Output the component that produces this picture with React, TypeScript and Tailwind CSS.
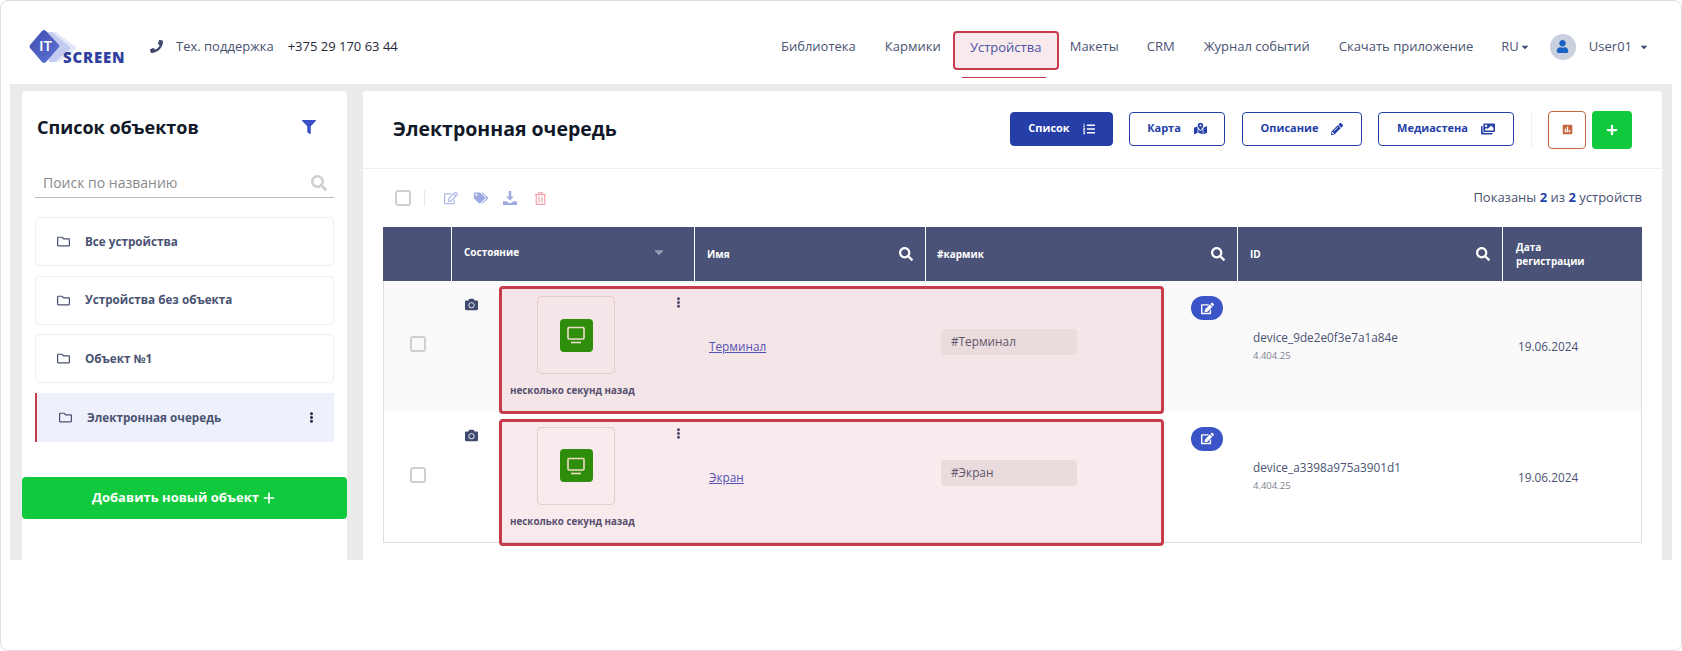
import { Plus } from 'lucide-react';
import {
  FaCamera,
  FaCaretDown,
  FaEdit,
  FaEllipsisV,
  FaFilter,
  FaImages,
  FaListOl,
  FaMapMarkedAlt,
  FaPencilAlt,
  FaPhone,
  FaPlus,
  FaPoll,
  FaRegEdit,
  FaRegFolder,
  FaRegTrashAlt,
  FaSearch,
  FaTags,
  FaUser,
} from 'react-icons/fa';

const navItems = [
  { label: 'Библиотека', cls: 'ml-0' },
  { label: 'Кармики', cls: 'ml-[29px]' },
];

const navRest = [
  { label: 'Макеты', cls: 'ml-[11px]' },
  { label: 'CRM', cls: 'ml-[28px]' },
  { label: 'Журнал событий', cls: 'ml-[29px]' },
  { label: 'Скачать приложение', cls: 'ml-[29px]' },
];

const objects = ['Все устройства', 'Устройства без объекта', 'Объект №1'];

function Logo() {
  return (
    <div className="relative w-[97px] h-[36px] shrink-0">
      <svg width="60" height="36" viewBox="0 0 60 36" className="absolute left-0 top-0">
        <defs>
          <linearGradient id="logoMain" x1="0" y1="0" x2="1" y2="1">
            <stop offset="0" stopColor="#3d4db0" />
            <stop offset="1" stopColor="#5f74d6" />
          </linearGradient>
        </defs>
        <path d="M27 3 L48 19 L30 33 L24 33 L20 3 Z" fill="#e3e7f8" />
        <path d="M23 3 L42 19 L26 33 L20 33 L16 3 Z" fill="#c3ccf0" />
        <path d="M15 1 Q16 1 17 2 L30 16 Q31 17 30 18 L17 33 Q15 35 13 33 L1 19 Q0 17 1 16 L13 2 Q14 1 15 1 Z" fill="url(#logoMain)" />
      </svg>
      <span className="absolute left-[10px] top-[6px] text-[15px] leading-[20px] font-semibold text-white">IT</span>
      <span className="absolute left-[34px] top-[19px] text-[15px] leading-[18px] font-extrabold tracking-[0.8px] text-[#2f3f9f]">SCREEN</span>
    </div>
  );
}

function Header() {
  return (
    <header className="h-[83px] flex items-center pl-[28px] pr-[32px] pt-[8px] text-[13px] text-[#4a5272]">
      <Logo />
      <FaPhone className="ml-[24px] text-[13px] text-[#3f4a6e]" />
      <span className="ml-[13px]">Тех. поддержка</span>
      <span className="ml-[14px] text-[#1f2937]">+375 29 170 63 44</span>
      <nav className="ml-auto flex items-center">
        {navItems.map((n) => (
          <span key={n.label} className={n.cls}>{n.label}</span>
        ))}
        <div className="relative ml-[12px] mt-[7px]">
          <span className="flex items-center justify-center w-[106px] h-[39px] pb-[4px] rounded-[4px] border-2 border-[#c63c4c] bg-[#f8e9ec] text-[#4a55a8]">
            Устройства
          </span>
          <div className="absolute left-[9px] top-[46px] w-[84px] h-px bg-[#c63c4c]" />
        </div>
        {navRest.map((n) => (
          <span key={n.label} className={n.cls}>{n.label}</span>
        ))}
        <span className="ml-[28px]">RU</span>
        <FaCaretDown className="ml-[1px] text-[10px] text-[#3f4a6e]" />
        <span className="ml-[20px] flex items-center justify-center w-[26px] h-[26px] rounded-full bg-[#c9cfdc]">
          <FaUser className="text-[13px] text-[#1a63c4]" />
        </span>
        <span className="ml-[13px]">User01</span>
        <FaCaretDown className="ml-[7px] text-[10px] text-[#3f4a6e]" />
      </nav>
    </header>
  );
}

function ObjectsPanel() {
  return (
    <aside className="w-[325px] shrink-0 bg-white rounded-t-[4px] px-[13px]">
      <div className="mt-[24px] h-[24px] flex items-center justify-between pl-[2px] pr-[18px]">
        <h2 className="text-[18px] font-bold text-[#111827]">Список объектов</h2>
        <FaFilter className="text-[14px] text-[#3b4fc4]" />
      </div>
      <div className="mt-[27px] h-[32px] flex items-center justify-between pl-[8px] pr-[7px] pt-[2px] border-b border-[#bbbbbb]">
        <span className="text-[14px] text-[#8a8a8a]">Поиск по названию</span>
        <FaSearch className="text-[16px] text-[#cfcfcf]" />
      </div>
      <div className="mt-[19px] flex flex-col gap-[9.67px]">
        {objects.map((o) => (
          <div key={o} className="h-[49px] flex items-center pl-[21px] rounded-[4px] border border-[#eeeeee]">
            <FaRegFolder className="text-[13px] text-[#4a5272]" />
            <span className="ml-[15px] text-[11.7px] font-bold text-[#4a5272]">{o}</span>
          </div>
        ))}
        <div className="h-[49px] flex items-center pl-[22px] pr-[17px] border-l-2 border-[#c63c4c] bg-[#eef0fb]">
          <FaRegFolder className="text-[13px] text-[#4a5272]" />
          <span className="ml-[15px] text-[11.7px] font-bold text-[#4a5272]">Электронная очередь</span>
          <FaEllipsisV className="ml-auto text-[11px] text-[#2b3350]" />
        </div>
      </div>
      <button className="mt-[35px] -mx-[13px] w-[325px] h-[42px] flex items-center justify-center gap-[2px] rounded-[4px] bg-[#10c93c] text-[13px] font-bold text-white">
        Добавить новый объект
        <Plus size={16} strokeWidth={2.5} />
      </button>
    </aside>
  );
}

function TabButton({ label, icon, active, cls }: { label: string; icon: React.ReactNode; active?: boolean; cls: string }) {
  return (
    <button
      className={
        'h-[34px] flex items-center justify-center gap-[13px] rounded-[4px] border border-[#253ea8] text-[11px] font-bold ' +
        cls +
        (active ? ' bg-[#253ea8] text-white' : ' bg-white text-[#253ea8]')
      }
    >
      {label}
      {icon}
    </button>
  );
}

function ColTitle({ children }: { children: React.ReactNode }) {
  return <span className="text-[10px] leading-[14px] font-bold text-white">{children}</span>;
}

function TableHeader() {
  return (
    <div className="h-[54px] grid grid-cols-[69px_243px_231px_312px_265px_139px] bg-[#4a5377]">
      <div className="border-r border-white" />
      <div className="border-r border-white flex items-start justify-between pl-[12px] pr-[28px] pt-[18px]">
        <ColTitle>Состояние</ColTitle>
        <FaCaretDown className="text-[14px] text-[#9aa0b4]" />
      </div>
      <div className="border-r border-white flex items-center justify-between pl-[12px] pr-[12px]">
        <ColTitle>Имя</ColTitle>
        <FaSearch className="text-[14px] text-white" />
      </div>
      <div className="border-r border-white flex items-center justify-between pl-[11px] pr-[12px]">
        <ColTitle>#кармик</ColTitle>
        <FaSearch className="text-[14px] text-white" />
      </div>
      <div className="border-r border-white flex items-center justify-between pl-[12px] pr-[12px]">
        <ColTitle>ID</ColTitle>
        <FaSearch className="text-[14px] text-white" />
      </div>
      <div className="flex items-center pl-[13px]">
        <ColTitle>Дата<br />регистрации</ColTitle>
      </div>
    </div>
  );
}

function Row({ name, tag, id, striped, boxCls }: { name: string; tag: string; id: string; striped?: boolean; boxCls: string }) {
  return (
    <div
      className={
        'relative h-[130.5px] grid grid-cols-[68px_243px_231px_312px_265px_138px] border-x border-[#dddddd] text-[11.8px] text-[#4a5272] ' +
        (striped ? 'bg-[#fafafa]' : 'bg-white')
      }
    >
      <div className="flex items-center justify-center pb-[4px]">
        <span className="w-[16px] h-[16px] rounded-[3px] border-2 border-[#d0d0d0]" />
      </div>
      <div className="flex pl-[13px] pt-[15px]">
        <FaCamera className="mt-[2px] text-[13px] text-[#3f4a6e] shrink-0" />
        <div className="ml-[32px] w-[170px]">
          <div className="flex">
            <div className="ml-[27px] w-[78px] h-[78px] shrink-0 flex items-center justify-center rounded-[4px] border border-[#e8dcdd]">
              <span className="w-[33px] h-[33px] flex items-center justify-center rounded-[4px] bg-[#1e9805]">
                <svg width="20" height="20" viewBox="0 0 20 20" fill="none" stroke="#f4f0d8" strokeWidth="1.6">
                  <rect x="2" y="2.5" width="16" height="11.5" rx="1" />
                  <path d="M5 17.5h10" />
                </svg>
              </span>
            </div>
            <FaEllipsisV className="ml-[58px] mt-[1px] shrink-0 text-[11px] text-[#4a5272]" />
          </div>
          <div className="mt-[10px] whitespace-nowrap text-[9.8px] leading-[14px] font-bold text-[#4a5272]">несколько секунд назад</div>
        </div>
      </div>
      <div className="flex items-center pl-[14px] pt-[2px]">
        <a className="underline text-[#4a55c0]">{name}</a>
      </div>
      <div className="flex items-center pl-[15px] pb-[8px]">
        <span className="w-[136px] h-[26px] flex items-center pl-[10px] rounded-[4px] bg-[#efeeed] text-[#555a70]">{tag}</span>
        <button className="self-start mt-[15px] ml-[114px] w-[32px] h-[24px] flex items-center justify-center rounded-full bg-[#3b55c8] text-white">
          <FaEdit className="text-[13px]" />
        </button>
      </div>
      <div className="flex flex-col justify-center pl-[15px] pb-[1px]">
        <span className="leading-[18px]">{id}</span>
        <span className="mt-[2px] text-[9.5px] leading-[16px] text-[#7b7f90]">4.404.25</span>
      </div>
      <div className="flex items-center pl-[15px] pt-[2px]">19.06.2024</div>
      <div className={'absolute z-10 left-[115px] w-[665px] rounded-[4px] border-[3px] border-[#c63c4c] bg-[#c63c4c]/10 pointer-events-none ' + boxCls} />
    </div>
  );
}

function DevicesPanel() {
  return (
    <section className="flex-1 min-w-0 bg-white rounded-t-[4px]">
      <div className="h-[78px] flex items-center pl-[30px] pr-[30px] border-b border-[#eeeeee]">
        <h1 className="pb-[2px] text-[19.5px] font-bold text-[#111827]">Электронная очередь</h1>
        <div className="ml-auto flex items-center">
          <TabButton active label="Список" cls="mb-[2px] w-[103px]" icon={<FaListOl className="text-[12px]" />} />
          <TabButton label="Карта" cls="mb-[2px] ml-[16px] w-[96px]" icon={<FaMapMarkedAlt className="text-[13px]" />} />
          <TabButton label="Описание" cls="mb-[2px] ml-[17px] w-[120px]" icon={<FaPencilAlt className="text-[12px]" />} />
          <TabButton label="Медиастена" cls="mb-[2px] ml-[16px] w-[136px]" icon={<FaImages className="text-[14px]" />} />
          <div className="ml-[17px] w-px h-[36px] bg-[#eeeeee]" />
          <button className="ml-[16px] w-[38px] h-[38px] flex items-center justify-center rounded-[4px] border border-[#c2683f]">
            <FaPoll className="text-[11px] text-[#c2683f]" />
          </button>
          <button className="ml-[6px] w-[40px] h-[38px] flex items-center justify-center rounded-[4px] bg-[#10c93c]">
            <FaPlus className="text-[12px] text-white" />
          </button>
        </div>
      </div>
      <div className="px-[20px]">
        <div className="h-[58px] flex items-center pl-[12px]">
          <span className="w-[16px] h-[16px] rounded-[3px] border-2 border-[#d0d0d0]" />
          <div className="ml-[13px] w-px h-[16px] bg-[#e5e5e5]" />
          <FaRegEdit className="ml-[19px] text-[14px] text-[#aeb8e8]" />
          <FaTags className="ml-[16px] text-[14px] text-[#9ea9e2]" />
          <svg width="14" height="14" viewBox="0 0 14 14" fill="#9ea9e2" className="ml-[15px]">
            <path d="M5.8 0h2.4v5.5h2.6L7 9.6 3.2 5.5h2.6z" />
            <path d="M0 10.2h3.4L5.5 11.8c.8.6 2.2.6 3 0l2.1-1.6H14V14H0z" />
          </svg>
          <FaRegTrashAlt className="ml-[17px] text-[13px] text-[#f0a5ac]" />
          <span className="ml-auto text-[13px] text-[#4a5272]">
            Показаны <b className="text-[#253ea8]">2</b> из <b className="text-[#253ea8]">2</b> устройств
          </span>
        </div>
        <TableHeader />
        <Row striped name="Терминал" tag="#Терминал" id="device_9de2e0f3e7a1a84e" boxCls="top-[5px] h-[128px]" />
        <Row name="Экран" tag="#Экран" id="device_a3398a975a3901d1" boxCls="top-[7px] h-[127px]" />
        <div className="h-px bg-[#dddddd]" />
      </div>
    </section>
  );
}

export default function App() {
  return (
    <div className="h-[651px] flex flex-col rounded-[8px] border border-[#dddddd] bg-white font-['Open_Sans',sans-serif]">
      <Header />
      <main className="h-[476px] mx-[9px] flex gap-[16px] pt-[7px] pl-[12px] pr-[10px] bg-[#ebebeb] overflow-hidden">
        <ObjectsPanel />
        <DevicesPanel />
      </main>
    </div>
  );
}
